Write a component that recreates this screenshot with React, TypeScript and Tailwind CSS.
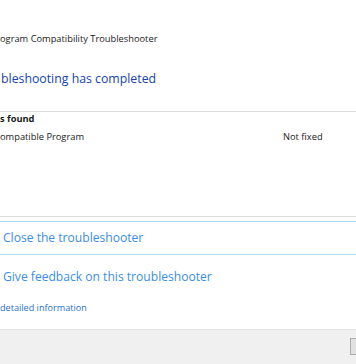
export default function App() {
  return (
    <div
      className="relative flex h-[364px] w-[356px] flex-col overflow-hidden bg-white text-[#1a1a1a]"
      style={{ fontFamily: '"Open Sans", "Noto Sans", sans-serif' }}
    >
      {/* wizard header, left part of the window is off-screen */}
      <p className="mt-[31px] whitespace-nowrap text-[9.3px] leading-[16px]">
        ogram Compatibility Troubleshooter
      </p>
      <h1 className="ml-px mt-[22px] whitespace-nowrap text-[12.3px] leading-[20px] text-[#1443ad]">
        bleshooting has completed
      </h1>

      <div className="mt-[22px] h-px w-full shrink-0 bg-[#dcdcdc]" />

      {/* problems table */}
      <p className="whitespace-nowrap text-[9.3px] font-bold leading-[14px]">s found</p>
      <div className="mt-[4px] flex text-[9.3px] leading-[14px]">
        <span className="w-[283px] shrink-0 whitespace-nowrap">ompatible Program</span>
        <span className="whitespace-nowrap">Not fixed</span>
      </div>

      <div className="mt-[72px] h-px w-full shrink-0 bg-[#dcdcdc]" />

      {/* command links */}
      <button
        type="button"
        className="mt-[4px] flex h-[34px] w-full shrink-0 items-center border-y border-[#b3d9f5] pl-[3px] text-left text-[12.1px] text-[#3a8ee6]"
      >
        Close the troubleshooter
      </button>
      <button
        type="button"
        className="mt-[5px] flex h-[34px] w-full shrink-0 items-center border-y border-transparent pl-[3px] text-left text-[12.1px] text-[#3a8ee6]"
      >
        Give feedback on this troubleshooter
      </button>

      <a className="mt-[7px] whitespace-nowrap text-[9.1px] leading-[14px] text-[#1f6fd0]">
        detailed information
      </a>

      {/* footer */}
      <div className="mt-auto flex h-[35px] shrink-0 border-t border-[#e3e3e3] bg-[#f0f0f0] pl-[350px] pt-[8px]">
        <div className="h-[17px] w-[75px] shrink-0 border border-[#adadad] bg-[#e1e1e1]" />
      </div>
    </div>
  );
}
